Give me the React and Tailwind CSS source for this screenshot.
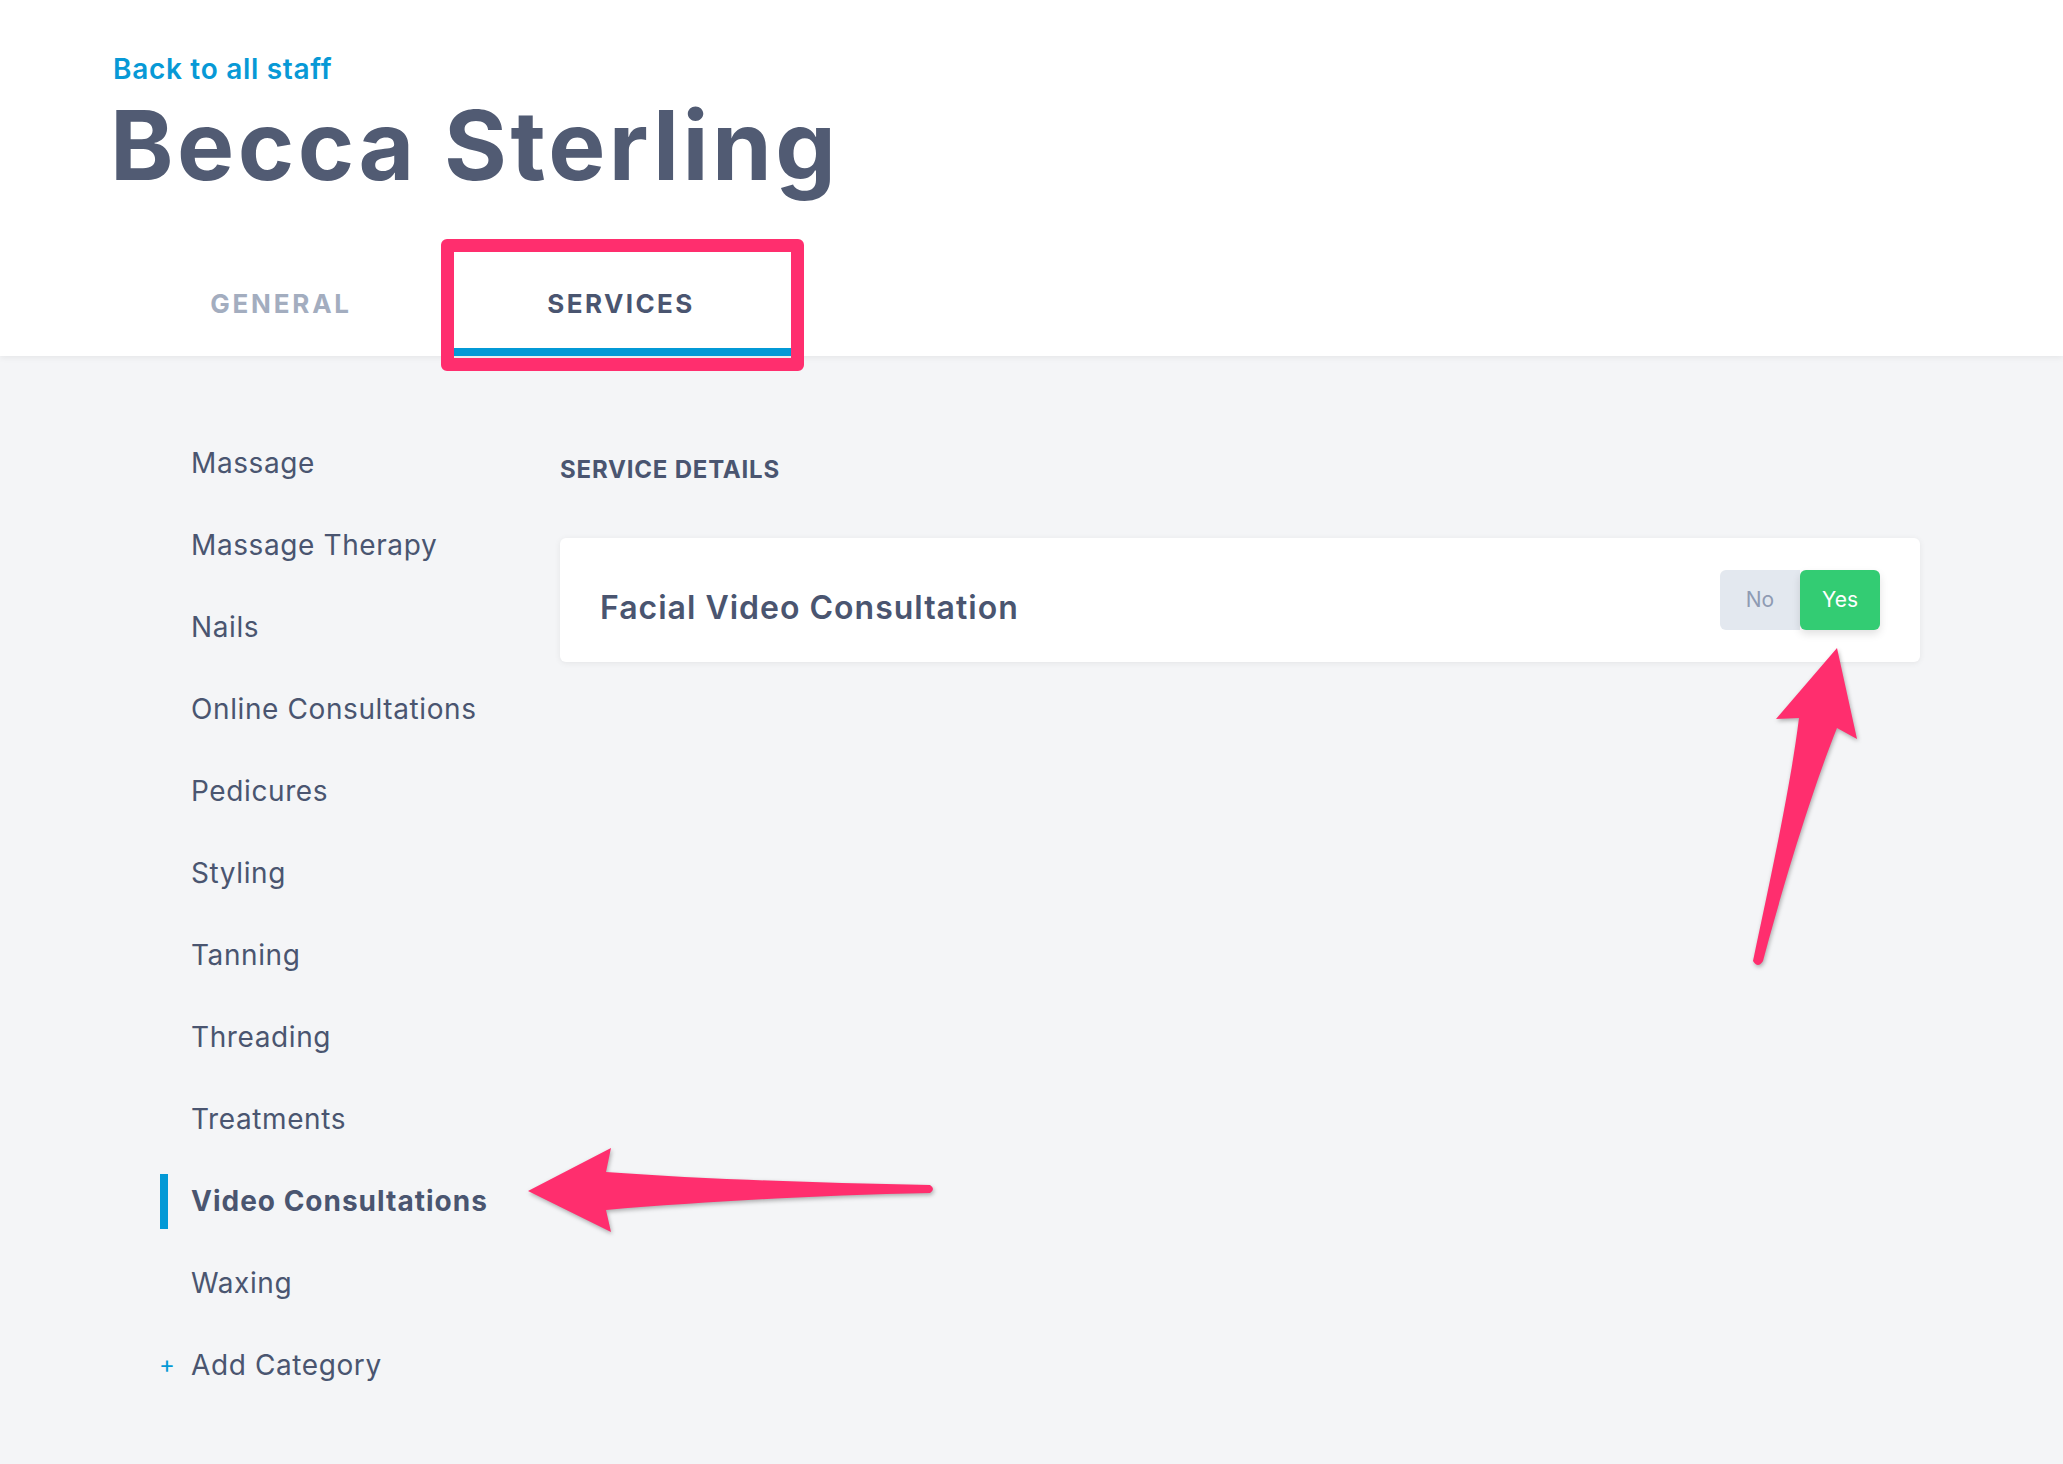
import React from "react";

const items = [
  "Massage",
  "Massage Therapy",
  "Nails",
  "Online Consultations",
  "Pedicures",
  "Styling",
  "Tanning",
  "Threading",
  "Treatments",
  "Video Consultations",
  "Waxing",
];

export default function App() {
  return (
    <div
      className="relative min-h-[1464px] w-full overflow-hidden bg-[#f4f5f7]"
      style={{ fontFamily: "Inter, 'Noto Sans', sans-serif" }}
    >
      <header className="relative z-10 bg-white shadow-[0_2px_6px_rgba(0,0,0,0.06)]">
        <div className="pl-[113px] pt-[49px]">
          <a className="block text-[28px] leading-[40px] font-semibold tracking-[0.7px] text-[#0799d6]">
            Back to all staff
          </a>
          <h1 className="-ml-[3px] mt-[6px] whitespace-nowrap text-[96px] leading-[100px] font-bold tracking-[3.5px] text-[#515b73]">
            Becca Sterling
          </h1>
          <div className="mt-[55px] flex">
            <div className="flex h-[106px] w-[336px] items-center justify-center border-b-[8px] border-transparent pt-[8px] text-[26px] font-bold uppercase tracking-[2.8px] text-[#a3adbf]">
              General
            </div>
            <div className="flex h-[106px] w-[344px] items-center justify-center border-b-[8px] border-[#0399d6] pt-[8px] text-[26px] font-bold uppercase tracking-[2.4px] text-[#4a5570]">
              Services
            </div>
          </div>
        </div>
      </header>

      <main className="flex">
        <nav className="w-[560px] shrink-0 pl-[160px] pt-[66px]">
          {items.map((name) => {
            const active = name === "Video Consultations";
            return (
              <div key={name} className="flex h-[82px] items-center">
                <span
                  className={
                    active
                      ? "h-[55px] w-[8px] shrink-0 bg-[#0399d6]"
                      : "h-[55px] w-[8px] shrink-0"
                  }
                />
                <span
                  className={
                    active
                      ? "ml-[23px] whitespace-nowrap text-[28px] font-bold tracking-[1px] text-[#4a5570]"
                      : "ml-[23px] whitespace-nowrap text-[28px] font-normal tracking-[0.6px] text-[#4a5570]"
                  }
                >
                  {name}
                </span>
              </div>
            );
          })}
          <div className="flex h-[82px] items-center">
            <span className="flex w-[14px] shrink-0 justify-center text-[24px] leading-none text-[#0399d6]">
              +
            </span>
            <span className="ml-[17px] whitespace-nowrap text-[28px] tracking-[0.6px] text-[#4a5570]">
              Add Category
            </span>
          </div>
        </nav>

        <section className="flex-1 pr-[143px] pt-[98px]">
          <h2 className="text-[24px] leading-[32px] font-bold uppercase tracking-[0.8px] text-[#4a5570]">
            Service Details
          </h2>
          <div className="mt-[52px] flex h-[124px] items-center justify-between rounded-[6px] bg-white px-[40px] shadow-[0_1px_6px_rgba(0,0,0,0.07)]">
            <div className="pt-[16px] text-[32px] font-semibold tracking-[1px] text-[#4a5570]">
              Facial Video Consultation
            </div>
            <div className="flex h-[60px]">
              <div className="flex w-[80px] items-center justify-center rounded-l-[6px] bg-[#e3e8ef] text-[21px] text-[#8f9bb3]">
                No
              </div>
              <div className="flex w-[80px] items-center justify-center rounded-[6px] bg-[#33cc73] text-[21px] text-white shadow-[0_4px_8px_rgba(0,0,0,0.12)]">
                Yes
              </div>
            </div>
          </div>
        </section>
      </main>

      <div className="pointer-events-none absolute left-[441px] top-[239px] z-20 h-[132px] w-[363px] rounded-[6px] border-[13px] border-[#ff2e6e]" />

      <svg
        className="pointer-events-none absolute left-0 top-0 z-30"
        width="2063"
        height="1464"
        viewBox="0 0 2063 1464"
        style={{ filter: "drop-shadow(1px 2px 2px rgba(0,0,0,0.3))" }}
      >
        <path
          fill="#ff2e6e"
          d="M1837,648 L1857,739 L1837,728 C1818,775 1790,860 1763,961 Q1758,969 1753,961 C1770,880 1790,790 1799,718 L1776,719 Z"
        />
        <path
          fill="#ff2e6e"
          d="M528,1191 L611,1148 L606,1172 C700,1179 820,1183 930,1185 Q936,1189 930,1193 C820,1195 700,1202 606,1210 L611,1232 Z"
        />
      </svg>
    </div>
  );
}
